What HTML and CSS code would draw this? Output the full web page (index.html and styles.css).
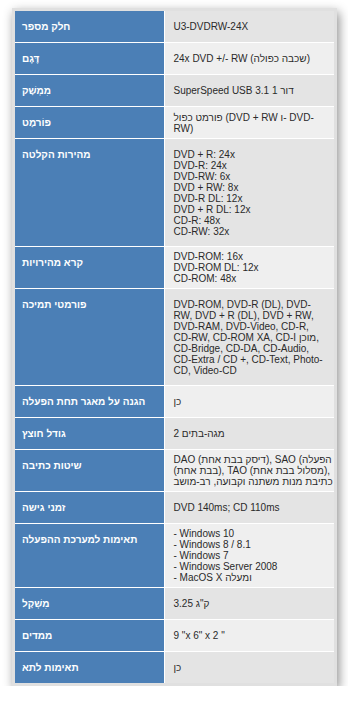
FILE: index.html
```html
<!DOCTYPE html>
<html lang="he">
<head>
  <meta charset="UTF-8">
  <title>U3-DVDRW-24X</title>
  <meta name="viewport" content="width=device-width, initial-scale=1.0">
  <link rel="stylesheet" href="styles.css">
</head>
<body>
<div class="specs-card">
  <table class="specs">
    <tr>
      <th>חלק מספר</th>
      <td>U3-DVDRW-24X</td>
    </tr>
    <tr>
      <th>דֶּגֶם</th>
      <td>24x DVD +/- RW (שכבה כפולה)</td>
    </tr>
    <tr>
      <th>מִמְשָׁק</th>
      <td>SuperSpeed USB 3.1 דור 1</td>
    </tr>
    <tr>
      <th>פוֹרמָט</th>
      <td><span class="line">פורמט כפול (DVD + RW ו- DVD-</span><span class="line">RW)</span></td>
    </tr>
    <tr>
      <th>מהירות הקלטה</th>
      <td class="spaced">DVD + R: 24x<br>DVD-R: 24x<br>DVD-RW: 6x<br>DVD + RW: 8x<br>DVD-R DL: 12x<br>DVD + R DL: 12x<br>CD-R: 48x<br>CD-RW: 32x</td>
    </tr>
    <tr>
      <th>קרא מהירויות</th>
      <td>DVD-ROM: 16x<br>DVD-ROM DL: 12x<br>CD-ROM: 48x</td>
    </tr>
    <tr>
      <th>פורמטי תמיכה</th>
      <td class="spaced">
        <span class="line">DVD-ROM, DVD-R (DL), DVD-</span>
        <span class="line">RW, DVD + R (DL), DVD + RW,</span>
        <span class="line">DVD-RAM, DVD-Video, CD-R,</span>
        <span class="line">CD-RW, CD-ROM XA, CD-I מוכן,</span>
        <span class="line">CD-Bridge, CD-DA, CD-Audio,</span>
        <span class="line">CD-Extra / CD +, CD-Text, Photo-</span>
        <span class="line">CD, Video-CD</span>
      </td>
    </tr>
    <tr>
      <th>הגנה על מאגר תחת הפעלה</th>
      <td>כן</td>
    </tr>
    <tr>
      <th>גודל חוצץ</th>
      <td>מגה-בתים 2</td>
    </tr>
    <tr>
      <th>שיטות כתיבה</th>
      <td>
        <span class="line">DAO (דיסק בבת אחת), SAO (הפעלה</span>
        <span class="line">(בבת אחת), TAO (מסלול בבת אחת),</span>
        <span class="line">כתיבת מנות משתנה וקבועה, רב-מושב</span>
      </td>
    </tr>
    <tr>
      <th>זמני גישה</th>
      <td>DVD 140ms; CD 110ms</td>
    </tr>
    <tr>
      <th>תאימות למערכת ההפעלה</th>
      <td>
        <span class="line">- Windows 10</span>
        <span class="line">- Windows 8 / 8.1</span>
        <span class="line">- Windows 7</span>
        <span class="line">- Windows Server 2008</span>
        <span class="line">- MacOS X ומעלה</span>
      </td>
    </tr>
    <tr>
      <th>מִשְׁקָל</th>
      <td>3.25 ק"ג</td>
    </tr>
    <tr>
      <th>ממדים</th>
      <td>9 "x 6" x 2 "</td>
    </tr>
    <tr>
      <th>תאימות לתא</th>
      <td>כן</td>
    </tr>
  </table>
</div>
</body>
</html>
```

FILE: styles.css
```css
* { box-sizing: border-box; }
body {
  margin: 0;
  background: #fff;
  font-family: "Liberation Sans", Arial, sans-serif;
}

.specs-card {
  width: 325px;
  margin: 8px 0 0 12px;
  padding: 3px;
  background: #e0e0e0;
  box-shadow: 2px 4px 10px rgba(0, 0, 0, 0.45);
}

.specs {
  width: 100%;
  table-layout: fixed;
  border-collapse: collapse;
  font-size: 10px;
  line-height: 11px;
}

.specs tr + tr th,
.specs tr + tr td {
  border-top: 1px solid #fff;
}

.specs th {
  width: 149px;
  padding: 10px 7px 10px 7px;
  background: #4b7fb6;
  color: #fff;
  font-weight: bold;
  text-align: left;
  vertical-align: top;
  border-right: 1px solid #fff;
}

.specs td {
  padding: 4px 6px 4px 9px;
  color: #2a2a2a;
  vertical-align: middle;
  text-align: left;
}

.specs tr:nth-child(odd) td { background: #e4e4e4; }
.specs tr:nth-child(even) td { background: #efefef; }

.specs td.spaced {
  padding-top: 9.5px;
  padding-bottom: 9.5px;
}

.line {
  display: block;
  white-space: nowrap;
}
```
